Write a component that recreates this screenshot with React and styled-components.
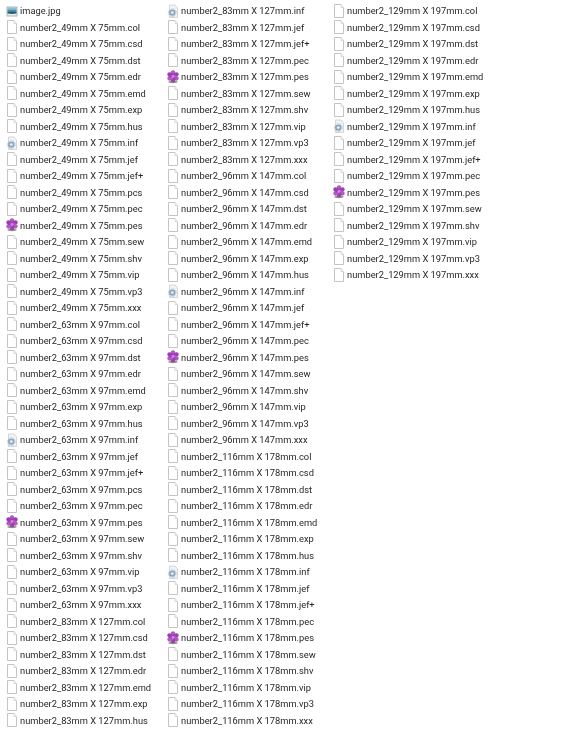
import React from "react";
import styled, { createGlobalStyle } from "styled-components";

const GlobalStyle = createGlobalStyle`
    html, body {
        margin: 0;
        padding: 0;
        background: #fff;
    }
`;

const Listing = styled.div`
    width: 570px;
    height: 734px;
    overflow: hidden;
    box-sizing: border-box;
    padding: 2.5px 0 0 6px;
    display: grid;
    grid-template-columns: 161px 166px 1fr;
    font-family: Roboto, "Open Sans", sans-serif;
    font-size: 9.3px;
    color: #262626;
`;

const Column = styled.div`
    display: flex;
    flex-direction: column;
`;

const Row = styled.div`
    height: 16.51px;
    display: flex;
    align-items: center;
    gap: 2px;
    white-space: nowrap;
    filter: blur(0.3px);
`;

const IconBox = styled.svg`
    width: 12px;
    height: 14px;
    flex: none;
`;

const BlankIcon = () => (
    <IconBox viewBox="0 0 12 14">
        <path d="M1.5.5H8L10.5 3.5v10h-9z" fill="#fff" stroke="#c4c4c4" />
        <path d="M8 .5v3h2.5" fill="#f6f6f6" stroke="#d8d8d8" />
    </IconBox>
);

const PictureIcon = () => (
    <IconBox viewBox="0 0 12 14">
        <rect x="1" y="3" width="10" height="9" fill="#e6eef2" stroke="#a9b6bd" />
        <path d="M1.5 3.5h9v2h-9z" fill="#9fb9c6" />
        <path d="M1.5 5.5h9v2.5h-9z" fill="#3f94bd" />
        <path d="M1.5 8l4-.6 5 .6v1.5c-3 .6-6 .6-9 0z" fill="#2f5a63" />
    </IconBox>
);

const SettingsIcon = () => (
    <IconBox viewBox="0 0 12 14">
        <path d="M2.5 1H8l2.5 3v9.5h-8z" fill="#f1f4f7" stroke="#d0d7dd" />
        <circle cx="5.3" cy="8.6" r="3.2" fill="#8ba7bd" />
        <circle cx="5.3" cy="8.6" r="3.9" fill="none" stroke="#a4bbcc" strokeDasharray="1.2 1.2" />
        <circle cx="5.3" cy="8.6" r="1.4" fill="#eaf0f4" />
    </IconBox>
);

const petals = [0, 60, 120, 180, 240, 300];

const FlowerIcon = () => (
    <IconBox viewBox="0 0 12 14">
        <path d="M1 12c2.4-2 7.6-2 10 0-2.4 1.6-7.6 1.6-10 0z" fill="#8da27c" />
        {petals.map(angle => (
            <ellipse
                key={angle}
                cx="6"
                cy="3.2"
                rx="2.3"
                ry="3"
                fill={angle % 120 === 0 ? "#b458c6" : "#9c3fb0"}
                transform={`rotate(${angle} 6 6.4)`}
            />
        ))}
        <circle cx="6" cy="6.4" r="1.4" fill="#d58bdc" />
    </IconBox>
);

const iconFor = ext => {
    if (ext === "jpg") return <PictureIcon />;
    if (ext === "inf") return <SettingsIcon />;
    if (ext === "pes") return <FlowerIcon />;
    return <BlankIcon />;
};

const longSet = "col csd dst edr emd exp hus inf jef jef+ pcs pec pes sew shv vip vp3 xxx".split(" ");
const shortSet = longSet.filter(ext => ext !== "pcs");

const files = (size, exts) => exts.map(ext => `number2_${size}.${ext}`);

const columns = [
    [
        "image.jpg",
        ...files("49mm X 75mm", longSet),
        ...files("63mm X 97mm", longSet),
        ...files("83mm X 127mm", shortSet.slice(0, 7))
    ],
    [
        ...files("83mm X 127mm", shortSet.slice(7)),
        ...files("96mm X 147mm", shortSet),
        ...files("116mm X 178mm", shortSet)
    ],
    files("129mm X 197mm", shortSet)
];

const App = () => (
    <>
        <GlobalStyle />
        <Listing>
            {columns.map((names, i) => (
                <Column key={i}>
                    {names.map(name => (
                        <Row key={name}>
                            {iconFor(name.split(".").pop())}
                            <span>{name}</span>
                        </Row>
                    ))}
                </Column>
            ))}
        </Listing>
    </>
);

export default App;
